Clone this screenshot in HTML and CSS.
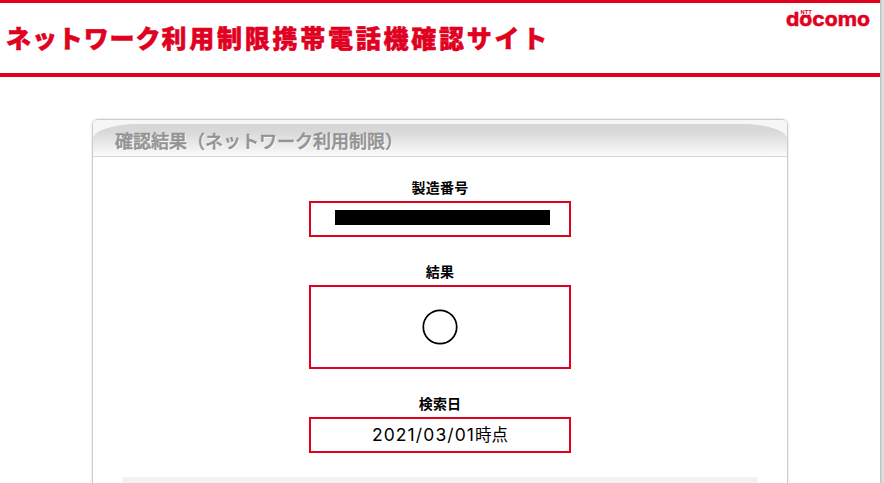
FILE: index.html
```html
<!DOCTYPE html>
<html lang="ja">
<head>
    <meta charset="UTF-8">
    <meta name="viewport" content="width=device-width, initial-scale=1.0">
    <title>ネットワーク利用制限携帯電話機確認サイト</title>
    <link rel="stylesheet" href="styles.css">
</head>
<body>
    <div class="page">
        <header class="header">
            <h1 class="site-title"><span class="kana">ネットワーク</span>利用制限携帯電話機確認サイト</h1>
            <svg class="logo" width="88" height="24" viewBox="0 0 88 24">
                <text class="logo-ntt" x="17.5" y="5.8" textLength="11.5" lengthAdjust="spacingAndGlyphs">NTT</text>
                <circle cx="20.3" cy="8" r="1.5"/>
                <circle cx="26" cy="8" r="1.5"/>
                <text class="logo-name" x="3" y="18.3" textLength="84" lengthAdjust="spacingAndGlyphs">docomo</text>
            </svg>
        </header>

        <main class="panel">
            <div class="panel-head">
                <h2 class="panel-title">確認結果（ネットワーク利用制限）</h2>
            </div>
            <div class="panel-body">
                <h3 class="label">製造番号</h3>
                <div class="box"><span class="mask"></span></div>

                <h3 class="label">結果</h3>
                <div class="box result">
                    <svg width="36" height="36" viewBox="0 0 36 36">
                        <circle cx="18" cy="18" r="16.7" fill="none" stroke="#000" stroke-width="1.7"/>
                    </svg>
                </div>

                <h3 class="label">検索日</h3>
                <div class="box date"><span class="digits">2021/03/01</span>時点</div>

                <div class="note"></div>
            </div>
        </main>
    </div>
</body>
</html>
```

FILE: styles.css
```css
html, body {
    height: 100%;
}
body {
    margin: 0;
    overflow: hidden;
    background: linear-gradient(to right, #bbb 880px, #dadada 882px, #e2e2e2 884px);
    font-family: "Noto Sans CJK JP", sans-serif;
    color: #000;
}
h1, h2, h3 {
    margin: 0;
}
.page {
    width: 880px;
    height: 100%;
    overflow: hidden;
    background: #fff;
}
.header {
    box-sizing: border-box;
    display: flex;
    justify-content: space-between;
    height: 77px;
    padding: 5px 9px 0 6px;
    border-top: 3px solid #e0001f;
    border-bottom: 4px solid #e0001f;
}
.site-title {
    padding-top: 9px;
    font-size: 25px;
    font-weight: 900;
    line-height: 40px;
    letter-spacing: 2.75px;
    white-space: nowrap;
    color: #e0001f;
    -webkit-text-stroke: 0.5px #e0001f;
}
.kana {
    letter-spacing: 0.9px;
}
.logo {
    fill: #e0001f;
    font-weight: 700;
}
.logo-ntt {
    font-family: "Inter", sans-serif;
    font-size: 5px;
}
.logo-name {
    font-family: "Inter", sans-serif;
    font-size: 19px;
    stroke: #e0001f;
    stroke-width: 0.5px;
}
.panel {
    box-sizing: border-box;
    width: 696px;
    height: 420px;
    margin: 42px 0 0 92px;
    border: 1px solid #ccc;
    border-radius: 6px;
    box-shadow: 0 0 2px 1px #eee;
    overflow: hidden;
}
.panel-head {
    box-sizing: border-box;
    height: 37px;
    padding-top: 4px;
    background: #f6f6f6;
    border-bottom: 1px solid #d8d8d8;
}
.panel-title {
    height: 32px;
    padding-left: 22px;
    border-radius: 44px 44px 0 0 / 15px 15px 0 0;
    background: linear-gradient(#d6d6d6, #d9d9d9 25%, #fafafa);
    font-size: 18px;
    font-weight: 500;
    line-height: 32px;
    color: #939393;
    -webkit-text-stroke: 0.5px #939393;
    text-shadow: 1px 1px 0 #fff;
}
.panel-body {
    display: flex;
    flex-direction: column;
    align-items: center;
    padding: 20px 29px 0;
}
.label {
    font-size: 14px;
    line-height: 20px;
    margin-bottom: 4px;
    letter-spacing: 0.2px;
}
.box {
    box-sizing: border-box;
    display: flex;
    align-items: center;
    justify-content: center;
    width: 262px;
    height: 36px;
    margin-bottom: 24px;
    border: 2px solid #e0001f;
}
.mask {
    width: 215px;
    height: 15px;
    margin: 0 0 3px 5px;
    background: #000;
}
.result {
    height: 84px;
}
.date {
    align-items: baseline;
    line-height: 30px;
    font-size: 16.5px;
}
.digits {
    font-family: "Inter", sans-serif;
    font-size: 17.5px;
    font-weight: 400;
    letter-spacing: 1.1px;
}
.note {
    align-self: stretch;
    height: 40px;
    background: #f2f2f2;
}
```
